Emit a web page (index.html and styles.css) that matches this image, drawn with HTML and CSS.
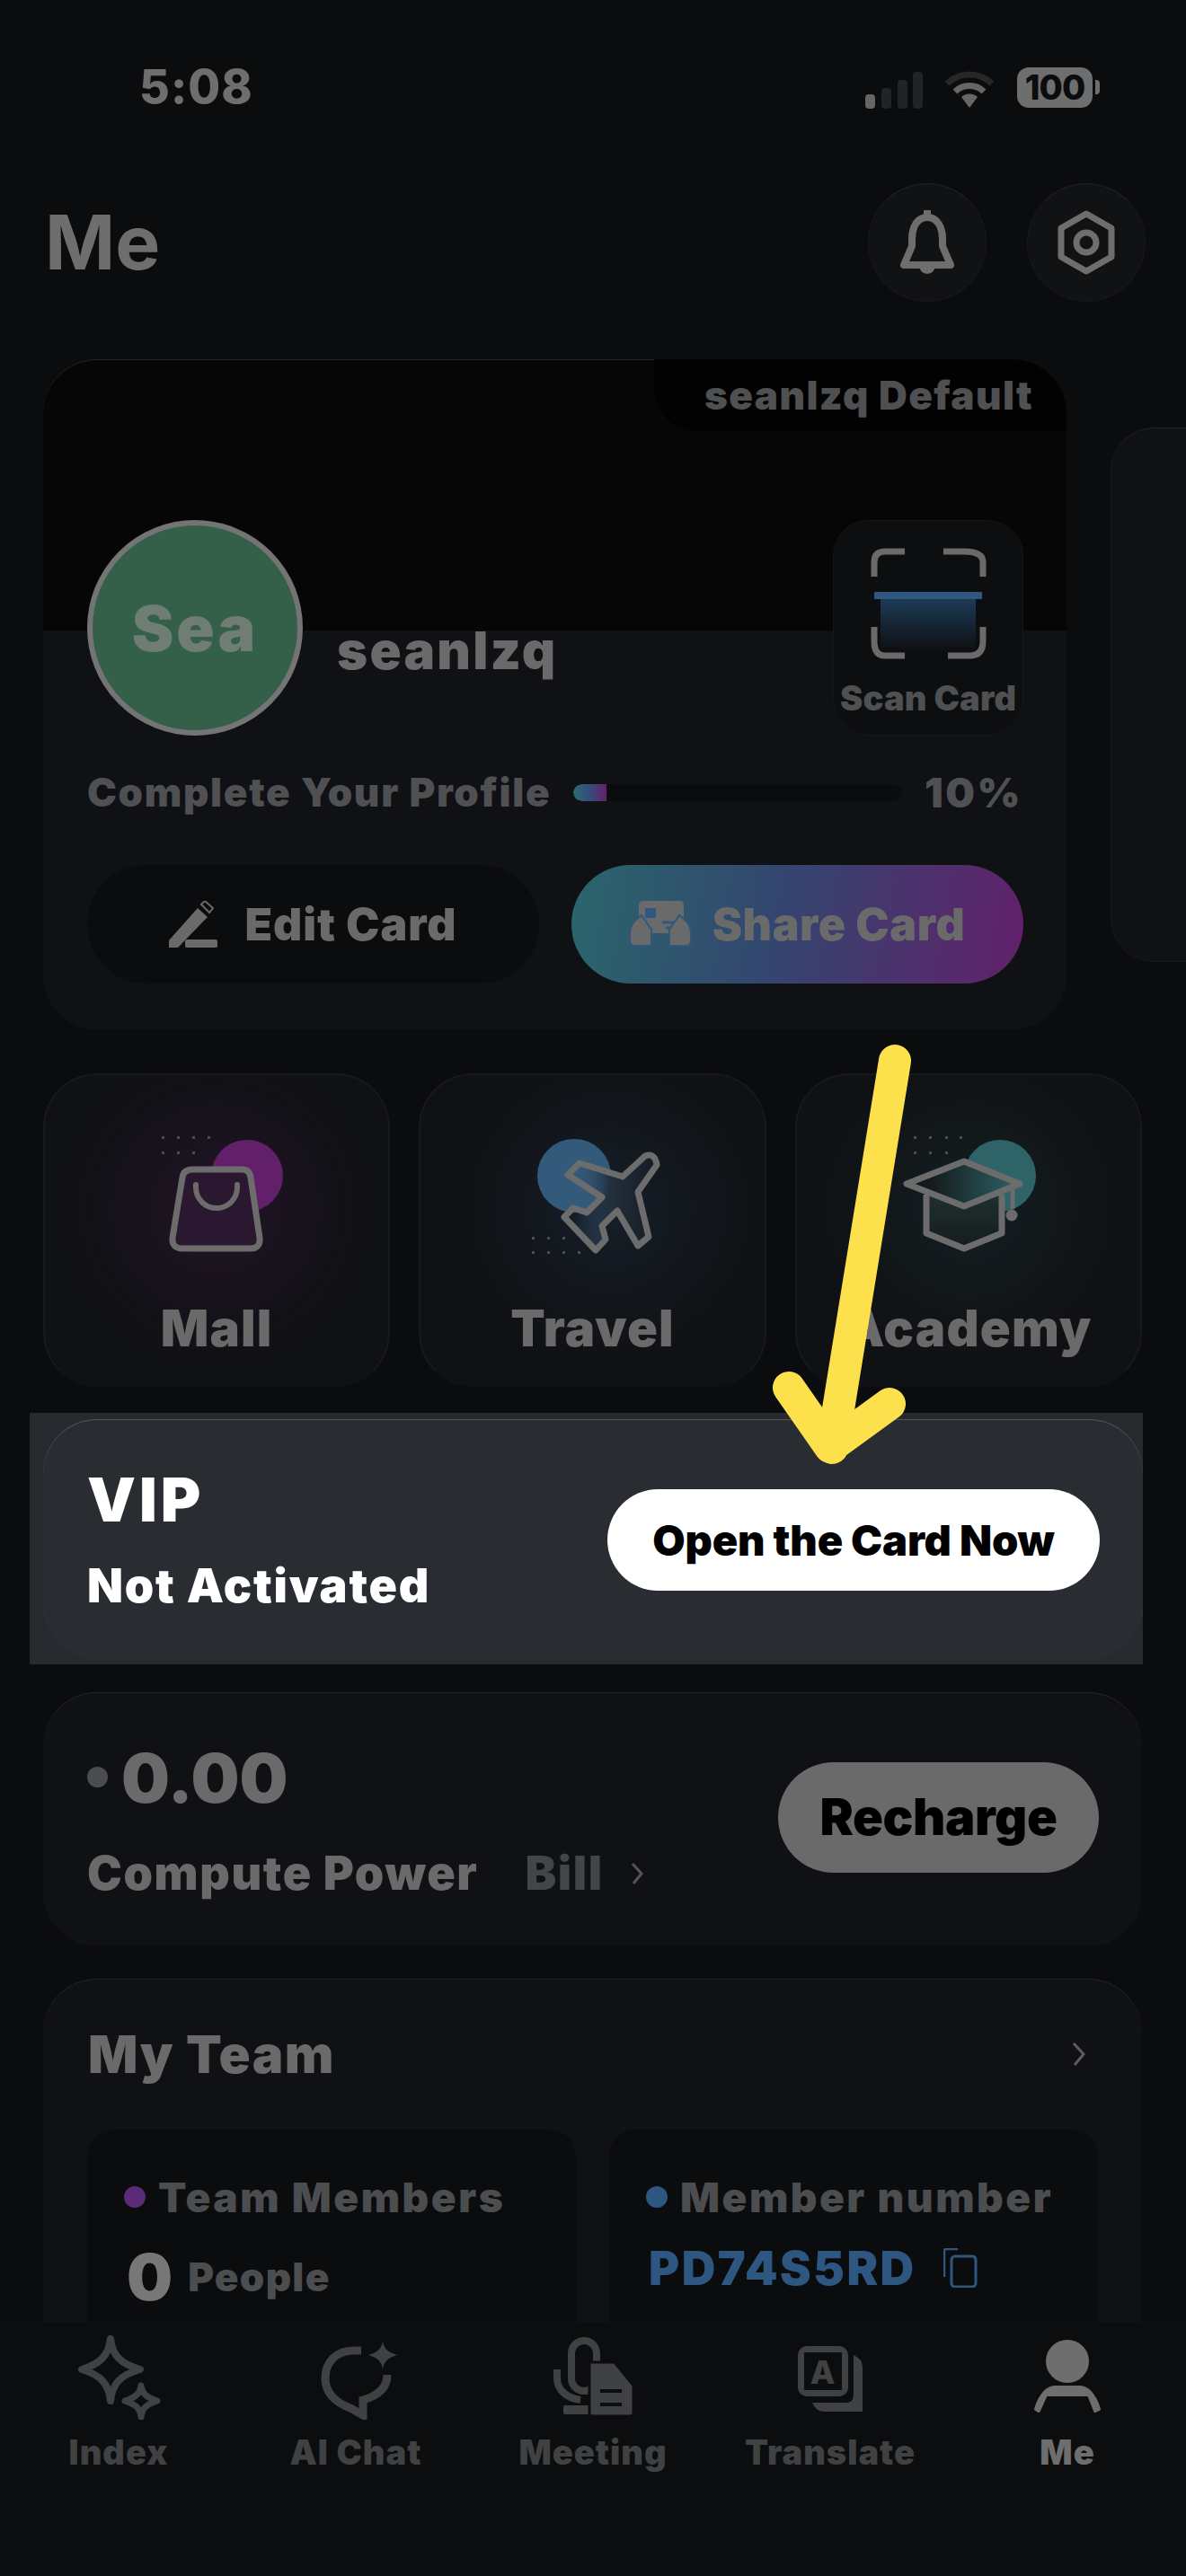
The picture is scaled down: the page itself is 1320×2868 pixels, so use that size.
FILE: index.html
```html
<!DOCTYPE html>
<html lang="en">
<head>
    <meta charset="UTF-8">
    <meta name="viewport" content="width=device-width, initial-scale=1.0">
    <title>Me</title>
    <link rel="stylesheet" href="styles.css">
</head>
<body>
<div class="screen">
    <div class="content">

        <!-- Status bar -->
        <div class="status">
            <span class="time">5:08</span>
            <div class="status-icons">
                <svg class="signal" width="64" height="41" viewBox="0 0 64 41">
                    <rect x="0" y="25" width="11" height="16" rx="4" fill="#666"/>
                    <rect x="18" y="18" width="11" height="23" rx="4" fill="#222325"/>
                    <rect x="36" y="9" width="11" height="32" rx="4" fill="#222325"/>
                    <rect x="53" y="0" width="11" height="41" rx="4" fill="#222325"/>
                </svg>
                <svg class="wifi" width="56" height="42" viewBox="0 0 56 42">
                    <path d="M3 15 A36 36 0 0 1 53 15" fill="none" stroke="#262729" stroke-width="7"/>
                    <path d="M12 24 A23 23 0 0 1 44 24" fill="none" stroke="#666" stroke-width="7"/>
                    <path d="M19 30 L28 42 L37 30 A13 13 0 0 0 19 30 Z" fill="#666"/>
                </svg>
                <div class="battery"><span>100</span></div>
                <div class="battery-nub"></div>
            </div>
        </div>

        <!-- Header -->
        <div class="header">
            <h1>Me</h1>
            <div class="header-btns">
                <div class="round-btn">
                    <svg width="64" height="72" viewBox="0 0 64 72">
                        <path d="M32 0 V8 M32 8 C20 8 15 20 15 32 V40 L6 61 H58 L49 40 V32 C49 20 44 8 32 8 Z" fill="none" stroke="#6e6e6e" stroke-width="8" stroke-linejoin="round"/>
                        <path d="M23 62 A9 9 0 0 0 41 62 Z" fill="#6e6e6e"/>
                    </svg>
                </div>
                <div class="round-btn">
                    <svg width="64" height="72" viewBox="0 0 64 72">
                        <path d="M32 4 L60 20 V52 L32 68 L4 52 V20 Z" fill="none" stroke="#6e6e6e" stroke-width="7" stroke-linejoin="round"/>
                        <circle cx="32" cy="36" r="11" fill="none" stroke="#6e6e6e" stroke-width="7"/>
                    </svg>
                </div>
            </div>
        </div>

        <!-- Card carousel -->
        <div class="carousel">
            <div class="card-main">
                <div class="card-tab-row"><div class="card-tab">seanlzq Default</div></div>
                <div class="profile-row">
                    <div class="avatar">Sea</div>
                    <div class="profile-name">seanlzq</div>
                    <div class="scan-box">
                        <svg width="132" height="124" viewBox="0 0 132 124">
                            <defs>
                                <linearGradient id="scanFill" x1="0" y1="0" x2="0" y2="1">
                                    <stop offset="0" stop-color="#1d3a55"/>
                                    <stop offset="1" stop-color="#0d0e10"/>
                                </linearGradient>
                            </defs>
                            <rect x="13" y="57" width="106" height="60" fill="url(#scanFill)"/>
                            <path d="M40 4 H18 Q6 4 6 16 V32 M83 4 H106 Q127 4 127 16 V32 M6 88 V104 Q6 120 18 120 H40 M127 88 V104 Q127 120 112 120 H88" fill="none" stroke="#6a6a6a" stroke-width="7"/>
                            <rect x="6" y="49" width="120" height="8" fill="#2f5880"/>
                        </svg>
                        <span>Scan Card</span>
                    </div>
                </div>
                <div class="progress-row">
                    <span>Complete Your Profile</span>
                    <div class="progress-track"><div class="progress-fill" style="width: 10%"></div></div>
                    <span class="progress-pct">10%</span>
                </div>
                <div class="card-btns">
                    <div class="btn-edit">
                        <svg width="54" height="52" viewBox="0 0 54 52">
                            <path d="M0 44 L32 8 L43 18 L10 52 H0 Z" fill="#6a6a6a"/>
                            <path d="M36 4 L40 0 L49 8 L45 13 Z" fill="none" stroke="#6a6a6a" stroke-width="2"/>
                            <rect x="18" y="43" width="36" height="9" rx="2" fill="#6a6a6a"/>
                        </svg>
                        Edit Card
                    </div>
                    <div class="btn-share">
                        <svg width="68" height="52" viewBox="0 0 68 52">
                            <path d="M10 5 Q10 0 15 0 H56 Q60 0 60 5 V36 H10 Z" fill="#6a6a6a"/>
                            <rect x="17" y="8" width="12" height="11" fill="#2f5880"/>
                            <path d="M36 24 H50 M40 30 H54" stroke="#2f5880" stroke-width="3"/>
                            <path d="M0 36 Q0 28 6 22 L13 16 L24 32 V50 H6 Q0 50 0 44 Z" fill="#6a6a6a" stroke="#31587a" stroke-width="2"/>
                            <path d="M68 36 Q68 28 62 22 L55 16 L44 32 V50 H62 Q68 50 68 44 Z" fill="#6a6a6a" stroke="#31587a" stroke-width="2"/>
                        </svg>
                        Share Card
                    </div>
                </div>
            </div>
            <div class="card-side"></div>
        </div>

        <!-- Shortcut tiles -->
        <div class="tiles">
            <div class="tile tile-mall">
                <svg class="tile-icon" width="240" height="160" viewBox="0 0 240 160">
                    <circle cx="154" cy="59" r="40" fill="#62206a"/>
                    <path d="M94 52 H148 Q157 52 158 61 L168 128 Q169 140 158 140 H82 Q70 140 71 128 L82 61 Q83 52 94 52 Z" fill="#2a1730" stroke="#6c6c6c" stroke-width="7" stroke-linejoin="round"/>
                    <path d="M97 69 V72 A23 23 0 0 0 143 72 V69" fill="none" stroke="#6c6c6c" stroke-width="6" stroke-linecap="round"/>
                    <g fill="#4d4d4f">
                        <rect x="59" y="15" width="3" height="3"/><rect x="76" y="15" width="3" height="3"/><rect x="93" y="15" width="3" height="3"/><rect x="110" y="15" width="3" height="3"/>
                        <rect x="59" y="32" width="3" height="3"/><rect x="76" y="32" width="3" height="3"/><rect x="93" y="32" width="3" height="3"/>
                    </g>
                </svg>
                <span>Mall</span>
            </div>
            <div class="tile tile-travel">
                <svg class="tile-icon" width="240" height="160" viewBox="0 0 240 160">
                    <defs>
                        <linearGradient id="planeFill" x1="0" y1="0" x2="1" y2="0">
                            <stop offset="0.1" stop-color="#33597b" stop-opacity="0"/>
                            <stop offset="0.5" stop-color="#232f3c"/>
                            <stop offset="1" stop-color="#141a22"/>
                        </linearGradient>
                    </defs>
                    <circle cx="100" cy="59" r="41" fill="#33597b"/>
                    <path d="M179 37 Q190 33 192 47 L171 77 L183 127 L171 137 L148 98 L131 115 L135 130 L124 142 L89 105 L99 95 L114 100 L131 83 L93 58 L106 45 L154 60 Z" fill="url(#planeFill)" stroke="#6c6c6c" stroke-width="7" stroke-linejoin="round"/>
                    <g fill="#4d4d4f">
                        <rect x="53" y="127" width="3" height="3"/><rect x="70" y="127" width="3" height="3"/><rect x="87" y="127" width="3" height="3"/>
                        <rect x="53" y="143" width="3" height="3"/><rect x="70" y="143" width="3" height="3"/><rect x="87" y="143" width="3" height="3"/><rect x="104" y="143" width="3" height="3"/>
                    </g>
                </svg>
                <span>Travel</span>
            </div>
            <div class="tile tile-academy">
                <svg class="tile-icon" width="240" height="160" viewBox="0 0 240 160">
                    <defs>
                        <linearGradient id="capFill" x1="0" y1="0" x2="1" y2="0">
                            <stop offset="0.2" stop-color="#141a1b"/>
                            <stop offset="1" stop-color="#2e6468"/>
                        </linearGradient>
                        <linearGradient id="bodyFill" x1="0" y1="0" x2="0" y2="1">
                            <stop offset="0" stop-color="#1f2f30"/>
                            <stop offset="1" stop-color="#151b1c"/>
                        </linearGradient>
                    </defs>
                    <circle cx="155" cy="59" r="40" fill="#2e6468"/>
                    <path d="M73 80 V123 L115 140 L157 123 V80" fill="url(#bodyFill)" stroke="#6c6c6c" stroke-width="7" stroke-linejoin="round"/>
                    <path d="M115 43 L51 68 L115 93 L177 68 Z" fill="url(#capFill)" stroke="#6c6c6c" stroke-width="7" stroke-linejoin="round"/>
                    <path d="M169 71 V96" stroke="#6c6c6c" stroke-width="5"/>
                    <circle cx="168" cy="103" r="6.500" fill="#6c6c6c"/>
                    <g fill="#4d4d4f">
                        <rect x="59" y="15" width="3" height="3"/><rect x="76" y="15" width="3" height="3"/><rect x="94" y="15" width="3" height="3"/><rect x="110" y="15" width="3" height="3"/>
                        <rect x="59" y="32" width="3" height="3"/><rect x="76" y="32" width="3" height="3"/><rect x="94" y="32" width="3" height="3"/>
                    </g>
                </svg>
                <span>Academy</span>
            </div>
        </div>

        <!-- VIP -->
        <div class="vip-wrap">
            <div class="vip-card">
                <div>
                    <div class="vip-title">VIP</div>
                    <div class="vip-sub">Not Activated</div>
                </div>
                <div class="vip-btn">Open the Card Now</div>
            </div>
        </div>

        <!-- Compute power -->
        <div class="panel compute">
            <div>
                <div class="amount"><i class="amount-dot"></i><b>0.00</b></div>
                <div class="compute-row">
                    <span class="compute-label">Compute Power</span>
                    <span class="compute-bill">Bill</span>
                    <svg width="14" height="24" viewBox="0 0 14 24"><path d="M2 1 L12 12 L3 23" fill="none" stroke="#555" stroke-width="3"/></svg>
                </div>
            </div>
            <div class="recharge">Recharge</div>
        </div>

        <!-- Team -->
        <div class="panel team">
            <div class="team-head">
                <span>My Team</span>
                <svg width="15" height="26" viewBox="0 0 15 26"><path d="M2 1 L13 13 L3 25" fill="none" stroke="#5c5c5c" stroke-width="3"/></svg>
            </div>
            <div class="team-grid">
                <div class="team-box">
                    <div class="team-label"><i class="dot-purple"></i>Team Members</div>
                    <div class="team-count"><b>0</b><span>People</span></div>
                </div>
                <div class="team-box">
                    <div class="team-label"><i class="dot-blue"></i>Member number</div>
                    <div class="team-code">
                        <span>PD74S5RD</span>
                        <svg width="38" height="44" viewBox="0 0 38 44">
                            <path d="M16 1 H3 Q1 1 1 3 V32" fill="none" stroke="#2d5680" stroke-width="2.500"/>
                            <rect x="9" y="9" width="27" height="34" rx="4" fill="none" stroke="#2d5680" stroke-width="3"/>
                        </svg>
                    </div>
                </div>
            </div>
        </div>
    </div>

    <!-- Tab bar -->
    <div class="tabbar">
        <div class="tab">
            <svg width="100" height="96" viewBox="0 0 100 96">
                <path d="M41 6 C43 25 53 34 74 40 C53 46 43 55 41 75 C39 55 29 46 9 40 C29 34 39 25 41 6 Z" fill="none" stroke="#404142" stroke-width="8" stroke-linejoin="round"/>
                <path d="M75 58 C76 67 81 71 93 75 C81 79 76 83 75 93 C74 83 69 79 57 75 C69 71 74 67 75 58 Z" fill="none" stroke="#404142" stroke-width="7" stroke-linejoin="round"/>
            </svg>
            <span>Index</span>
        </div>
        <div class="tab">
            <svg width="100" height="96" viewBox="0 0 100 96">
                <path d="M56 19 H48 C28 19 16 32 16 50 C16 66 27 77 46 84 L58 91 V74 C72 70 85 62 85 46" fill="none" stroke="#404142" stroke-width="9"/>
                <path d="M80 8 C81 17 86 21 96 24 C86 27 81 31 80 40 C79 31 74 27 64 24 C74 21 79 17 80 8 Z" fill="#404142"/>
            </svg>
            <span>AI Chat</span>
        </div>
        <div class="tab">
            <svg width="100" height="96" viewBox="0 0 100 96">
                <rect x="26" y="8" width="28" height="56" rx="14" fill="none" stroke="#404142" stroke-width="8"/>
                <path d="M10 40 V50 C10 62 20 72 36 74" fill="none" stroke="#404142" stroke-width="8"/>
                <rect x="17" y="80" width="32" height="10" rx="2" fill="#404142"/>
                <path d="M46 32 H74 L95 58 V88 Q95 92 91 92 H50 Q46 92 46 88 Z" fill="#404142" stroke="#0c0d0f" stroke-width="3"/>
                <path d="M58 64 H82 M58 79 H82" stroke="#0c0d0f" stroke-width="4"/>
            </svg>
            <span>Meeting</span>
        </div>
        <div class="tab">
            <svg width="100" height="96" viewBox="0 0 100 96">
                <path d="M76 24 Q86 28 86 38 V87 H44 Q34 87 30 77 H68 Q76 77 76 68 Z" fill="#404142"/>
                <rect x="14" y="14" width="56" height="56" rx="10" fill="#404142"/>
                <rect x="21" y="21" width="42" height="42" fill="#0c0d0f"/>
                <text x="42" y="56" text-anchor="middle" font-family="Inter, sans-serif" font-weight="800" font-size="36" fill="#404142">A</text>
            </svg>
            <span>Translate</span>
        </div>
        <div class="tab active">
            <svg width="100" height="96" viewBox="0 0 100 96">
                <ellipse cx="50" cy="31" rx="24" ry="24" fill="#6e6e6e"/>
                <path d="M18 86 L15 84 C20 68 28 60 36 60 H64 C72 60 80 68 85 84 L81 86 L74 68 H26 Z" fill="#6e6e6e" stroke="#6e6e6e" stroke-width="4" stroke-linejoin="round"/>
            </svg>
            <span>Me</span>
        </div>
    </div>

    <!-- Annotation arrow over the page -->
    <svg class="arrow" width="1320" height="2868" viewBox="0 0 1320 2868">
        <path d="M996 1181 L926 1612 M878 1545 L924 1611 L990 1563" fill="none" stroke="#fce14d" stroke-width="36" stroke-linecap="round" stroke-linejoin="round"/>
    </svg>
</div>
</body>
</html>
```
FILE: styles.css
```css
* { box-sizing: border-box; }
body { margin: 0; background: #0b0c0e; font-family: Inter, "Liberation Sans", sans-serif; font-weight: 900; color: #6a6a6a; }
.screen { position: relative; width: 1320px; height: 2868px; overflow: hidden; display: flex; flex-direction: column; background: #0b0c0e; }
.content { height: 2586px; overflow: hidden; flex-shrink: 0; }

/* Status bar */
.status { display: flex; justify-content: space-between; align-items: center; height: 54px; margin-top: 70px; padding: 0 96px 0 155px; }
.time { font-size: 52px; line-height: 54px; font-weight: 800; letter-spacing: 1px; color: #6e6e6e; }
.status-icons { display: flex; align-items: center; }
.signal { margin-top: 6px; }
.wifi { margin: 4px 25px 0 24px; }
.battery { width: 84px; height: 45px; border-radius: 13px; background: #6e6e6e; color: #0b0c0e; font-size: 38px; line-height: 45px; text-align: center; font-weight: 800; letter-spacing: -1px; }
.battery-nub { width: 5px; height: 16px; margin-left: 3px; border-radius: 0 4px 4px 0; background: #6e6e6e; }

/* Header */
.header { display: flex; justify-content: space-between; align-items: center; height: 132px; margin-top: 80px; padding: 0 45px 0 50px; }
h1 { margin: 0; font-size: 84px; line-height: 1; font-weight: 700; color: #6e6e6e; }
.header-btns { display: flex; gap: 45px; }
.round-btn { width: 132px; height: 132px; border-radius: 50%; display: flex; align-items: center; justify-content: center; background: #111214; border: 1px solid #18191b; border-top-color: #212224; }

/* Main card */
.carousel { display: flex; align-items: center; gap: 49px; margin-top: 64px; padding-left: 48px; overflow: hidden; }
.card-main { flex: 0 0 1139px; height: 746px; padding-bottom: 51px; border-radius: 60px; overflow: hidden; background: linear-gradient(#060607 302px, #101114 302px); box-shadow: inset 0 1px 0 #232426; }
.card-tab-row { display: flex; justify-content: flex-end; }
.card-tab { width: 459px; height: 80px; padding-right: 37px; border-bottom-left-radius: 48px; background: #020203; text-align: right; font-size: 44px; line-height: 80px; letter-spacing: 1.4px; color: #4f5052; }
.profile-row { display: flex; align-items: flex-start; margin: 99px 48px 0 49px; }
.avatar { width: 240px; height: 240px; border-radius: 50%; border: 6px solid #747474; background: #34604a; display: flex; align-items: center; justify-content: center; font-size: 70px; letter-spacing: 3px; color: #6f7d74; flex-shrink: 0; }
.profile-name { margin: 110px 0 0 38px; font-size: 58px; line-height: 70px; letter-spacing: 2.3px; color: #6a6a6a; flex-grow: 1; }
.scan-box { width: 212px; height: 240px; padding-top: 30px; border-radius: 40px; background: #0d0e10; border: 1px solid #151618; display: flex; flex-direction: column; align-items: center; font-size: 38px; letter-spacing: 0.2px; color: #4f5052; }
.scan-box span { margin-top: 20px; line-height: 46px; white-space: nowrap; }
.progress-row { display: flex; align-items: center; height: 44px; margin: 41px 49px 0; font-size: 44px; letter-spacing: 1.7px; color: #4f5052; white-space: nowrap; justify-content: space-between; }
.progress-pct { font-size: 46px; letter-spacing: 2.500px; }
.progress-track { width: 366px; height: 19px; border-radius: 10px; background: #0b0c0e; overflow: hidden; }
.progress-fill { height: 100%; border-radius: 10px 0 0 10px; background: linear-gradient(90deg, #2d6a70, #33507c 45%, #65206c); }
.card-btns { display: flex; gap: 36px; margin: 59px 48px 0 49px; }
.btn-edit, .btn-share { flex: 1; height: 132px; border-radius: 66px; display: flex; align-items: center; justify-content: center; gap: 30px; font-size: 50px; letter-spacing: 1px; color: #6a6a6a; }
.btn-edit { background: #0b0c0e; }
.btn-share { gap: 24px; letter-spacing: 0.6px; background: linear-gradient(100deg, #2a666c, #33466f 45%, #62206a); }
.card-side { flex: 0 0 300px; height: 595px; border-radius: 48px; background: #101114; border: 1px solid #17181a; border-top-color: #212224; }

/* Tiles */
.tiles { display: flex; gap: 32px; margin: 49px 0 0 48px; width: 1223px; }
.tile { flex: 1; height: 349px; border-radius: 60px; overflow: hidden; display: flex; flex-direction: column; align-items: center; border: 2px solid #18191c; border-bottom-color: #111215; font-size: 56px; letter-spacing: 1.2px; color: #6a6a6a; }
.tile-mall { background: radial-gradient(circle 170px at 50% 43%, rgba(107, 35, 112, 0.2), rgba(107, 35, 112, 0)), #101114; }
.tile-travel { background: radial-gradient(circle 170px at 55% 43%, rgba(44, 84, 120, 0.2), rgba(44, 84, 120, 0)), #101114; }
.tile-academy { background: radial-gradient(circle 170px at 50% 43%, rgba(44, 106, 108, 0.16), rgba(44, 106, 108, 0)), #101114; }
.tile-icon { margin-top: 53px; }
.tile span { margin-top: 35px; line-height: 68px; }

/* VIP */
.vip-wrap { width: 1239px; height: 280px; margin: 29px 0 0 33px; padding: 7px 0 0 15px; background: #26292e; }
.vip-card { width: 1224px; height: 268px; padding: 0 48px 0 49px; border-radius: 60px; display: flex; justify-content: space-between; align-items: center; background: #292c31; box-shadow: inset 0 1px 1px #54565a; color: #fff; }
.vip-title { font-size: 68px; line-height: 76px; letter-spacing: 4px; }
.vip-sub { margin-top: 28px; font-size: 52px; line-height: 62px; letter-spacing: 1.8px; }
.vip-btn { width: 548px; height: 113px; border-radius: 57px; background: #fff; color: #000; font-size: 47px; line-height: 113px; text-align: center; white-space: nowrap; letter-spacing: -0.2px; }

/* Panels */
.panel { width: 1223px; margin-left: 48px; border-radius: 60px; background: #101114; box-shadow: inset 0 1px 0 #232426; }
.compute { height: 283px; margin-top: 31px; padding: 0 48px 0 49px; display: flex; justify-content: space-between; align-items: center; }
.amount { display: flex; align-items: center; height: 70px; margin-top: 10px; }
.amount-dot { width: 23px; height: 23px; margin-right: 15px; border-radius: 50%; background: #4b4c4e; }
.amount b { font-size: 76px; line-height: 70px; font-weight: 900; color: #6a6a6a; }
.compute-row { display: flex; align-items: center; margin-top: 40px; }
.compute-label { font-size: 52px; line-height: 64px; letter-spacing: 1.6px; color: #6a6a6a; }
.compute-bill { margin: 0 30px 0 52px; font-size: 52px; line-height: 64px; letter-spacing: 1.6px; color: #444547; }
.recharge { width: 357px; height: 123px; margin-top: -4px; border-radius: 62px; background: #6a6a6a; color: #000; font-size: 56px; line-height: 123px; text-align: center; letter-spacing: -0.4px; }
.team { height: 600px; margin-top: 36px; padding: 0 49px; }
.team-head { display: flex; justify-content: space-between; align-items: center; height: 168px; padding: 0 14px 0 1px; font-size: 58px; letter-spacing: 1.4px; color: #6a6a6a; }
.team-grid { display: flex; gap: 37px; }
.team-box { flex: 1; height: 300px; padding: 52px 0 0 41px; border-radius: 30px; background: #0b0c0e; }
.team-label { display: flex; align-items: center; height: 46px; font-size: 46px; letter-spacing: 2.500px; color: #4c4d4e; white-space: nowrap; }
.team-label i { width: 24px; height: 24px; margin-right: 14px; border-radius: 50%; }
.dot-purple { background: #5c2a76; }
.dot-blue { background: #2d5680; }
.team-count { display: flex; align-items: center; margin: 30px 0 0 3px; }
.team-count b { font-size: 72px; line-height: 72px; color: #777; }
.team-count span { margin-left: 17px; font-size: 44px; letter-spacing: 1.3px; color: #4c4d4e; }
.team-code { display: flex; align-items: center; margin: 34px 0 0 3px; height: 44px; font-size: 52px; letter-spacing: 2.500px; color: #2d5680; }
.team-code svg { margin-left: 30px; }

/* Tab bar */
.tabbar { flex: 1; display: flex; background: #0c0d0f; padding-top: 12px; }
.tab { flex: 1; display: flex; flex-direction: column; align-items: center; font-size: 38px; letter-spacing: 1px; color: #404142; }
.tab span { margin-top: 13px; line-height: 46px; }
.tab.active { color: #6e6e6e; }

.arrow { position: absolute; left: 0; top: 0; pointer-events: none; }
```
